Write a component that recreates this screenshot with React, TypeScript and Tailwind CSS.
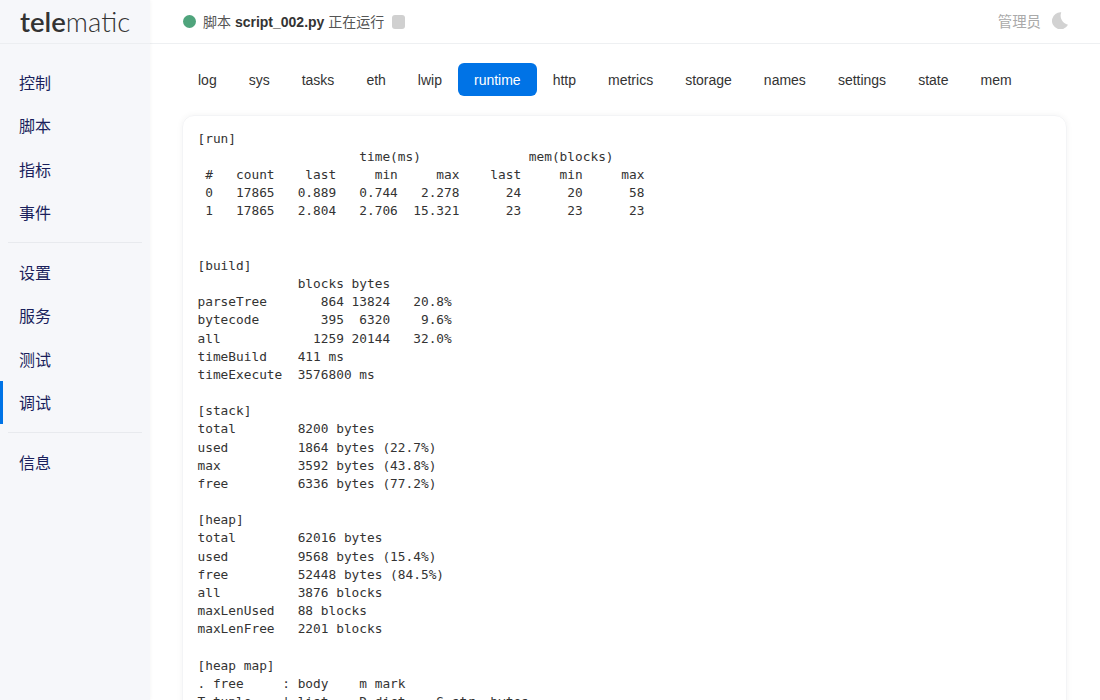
import React from "react";

const TABS = ["log", "sys", "tasks", "eth", "lwip", "runtime", "http", "metrics", "storage", "names", "settings", "state", "mem"];

const OUTPUT = `[run]
                     time(ms)              mem(blocks)
 #   count    last     min     max    last     min     max
 0   17865   0.889   0.744   2.278      24      20      58
 1   17865   2.804   2.706  15.321      23      23      23


[build]
             blocks bytes
parseTree       864 13824   20.8%
bytecode        395  6320    9.6%
all            1259 20144   32.0%
timeBuild    411 ms
timeExecute  3576800 ms

[stack]
total        8200 bytes
used         1864 bytes (22.7%)
max          3592 bytes (43.8%)
free         6336 bytes (77.2%)

[heap]
total        62016 bytes
used         9568 bytes (15.4%)
free         52448 bytes (84.5%)
all          3876 blocks
maxLenUsed   88 blocks
maxLenFree   2201 blocks

[heap map]
. free     : body    m mark
T tuple    | list    D dict    S str, bytes`;

const NavItem = ({ label, active }: { label: string; active?: boolean }) => (
  <div
    className={`h-[43.33px] flex items-center pl-[16px] pt-[3px] text-[16px] text-[#1a1f5c] border-l-[3px] ${
      active ? "border-[#0073e6]" : "border-transparent"
    }`}
  >
    {label}
  </div>
);

const App = () => {
  return (
    <div className="h-screen flex overflow-hidden bg-white font-['Liberation_Sans','Noto_Sans_CJK_SC',sans-serif]">
      {/* ===== SIDEBAR ===== */}
      <div className="w-[150px] shrink-0 bg-[#f6f7fa] shadow-[0_0_4px_rgba(0,0,0,0.05)] z-10">
        <div className="h-[44px] border-b border-[#eceef1] pl-[20px] flex items-center text-[27.5px] text-[#333] font-['Lato',sans-serif] leading-none">
          <span className="font-semibold">tele</span>
          <span className="font-light">matic</span>
        </div>
        <div className="pt-[16.7px]">
          <NavItem label="控制" />
          <NavItem label="脚本" />
          <NavItem label="指标" />
          <NavItem label="事件" />
          <div className="h-px bg-[#e8eaee] mx-[8px] my-[8px]" />
          <NavItem label="设置" />
          <NavItem label="服务" />
          <NavItem label="测试" />
          <NavItem label="调试" active />
          <div className="h-px bg-[#e8eaee] mx-[8px] my-[8px]" />
          <NavItem label="信息" />
        </div>
      </div>
      {/* ===== SIDEBAR END ===== */}

      <div className="flex-1 min-w-0 flex flex-col">
        {/* ===== HEADER ===== */}
        <div className="h-[44px] shrink-0 border-b border-[#eef0f2] flex items-center justify-between pl-[33px] pr-[32px]">
          <div className="flex items-center text-[14px] text-[#555]">
            <span className="w-[13px] h-[13px] rounded-full bg-[#4fa47c] mr-[7px]" />
            <span className="pt-[2px]">脚本&nbsp;</span>
            <b className="font-bold text-[#333] pt-[2px]">script_002.py</b>
            <span className="pt-[2px]">&nbsp;正在运行</span>
            <span className="w-[13px] h-[14px] rounded-[3px] bg-[#d0d0d0] ml-[8px]" />
          </div>
          <div className="flex items-center text-[14.4px] text-[#aaa]">
            <span className="pt-[2px]">管理员</span>
            <svg viewBox="0 0 24 24" className="w-[17px] h-[17px] ml-[10px] mb-[1px] fill-[#d2d2d2]">
              <path d="M14.5 0.5A12 12 0 1 0 24 18 13 13 0 0 1 14.5 0.5z" />
            </svg>
          </div>
        </div>
        {/* ===== HEADER END ===== */}

        <div className="flex-1 min-h-0 pt-[19px] pl-[32px] pr-[33px]">
          {/* ===== TABS ===== */}
          <div className="flex">
            {TABS.map((tab) => (
              <div
                key={tab}
                className={`h-[33px] px-[16px] pt-[2px] flex items-center text-[14px] rounded-[6px] ${
                  tab === "runtime" ? "bg-[#0073e6] text-white" : "text-[#333]"
                }`}
              >
                {tab}
              </div>
            ))}
          </div>
          {/* ===== TABS END ===== */}

          {/* ===== OUTPUT ===== */}
          <div className="mt-[19px] rounded-[12px] border border-[#f3f4f6] shadow-[0_0_6px_rgba(0,0,0,0.05)] pt-[13.7px] pl-[14.5px] pr-[14px] h-[700px]">
            <pre className="font-['DejaVu_Sans_Mono',monospace] text-[12.8px] leading-[18.176px] text-[#333]">{OUTPUT}</pre>
          </div>
          {/* ===== OUTPUT END ===== */}
        </div>
      </div>
    </div>
  );
};

export default App;
